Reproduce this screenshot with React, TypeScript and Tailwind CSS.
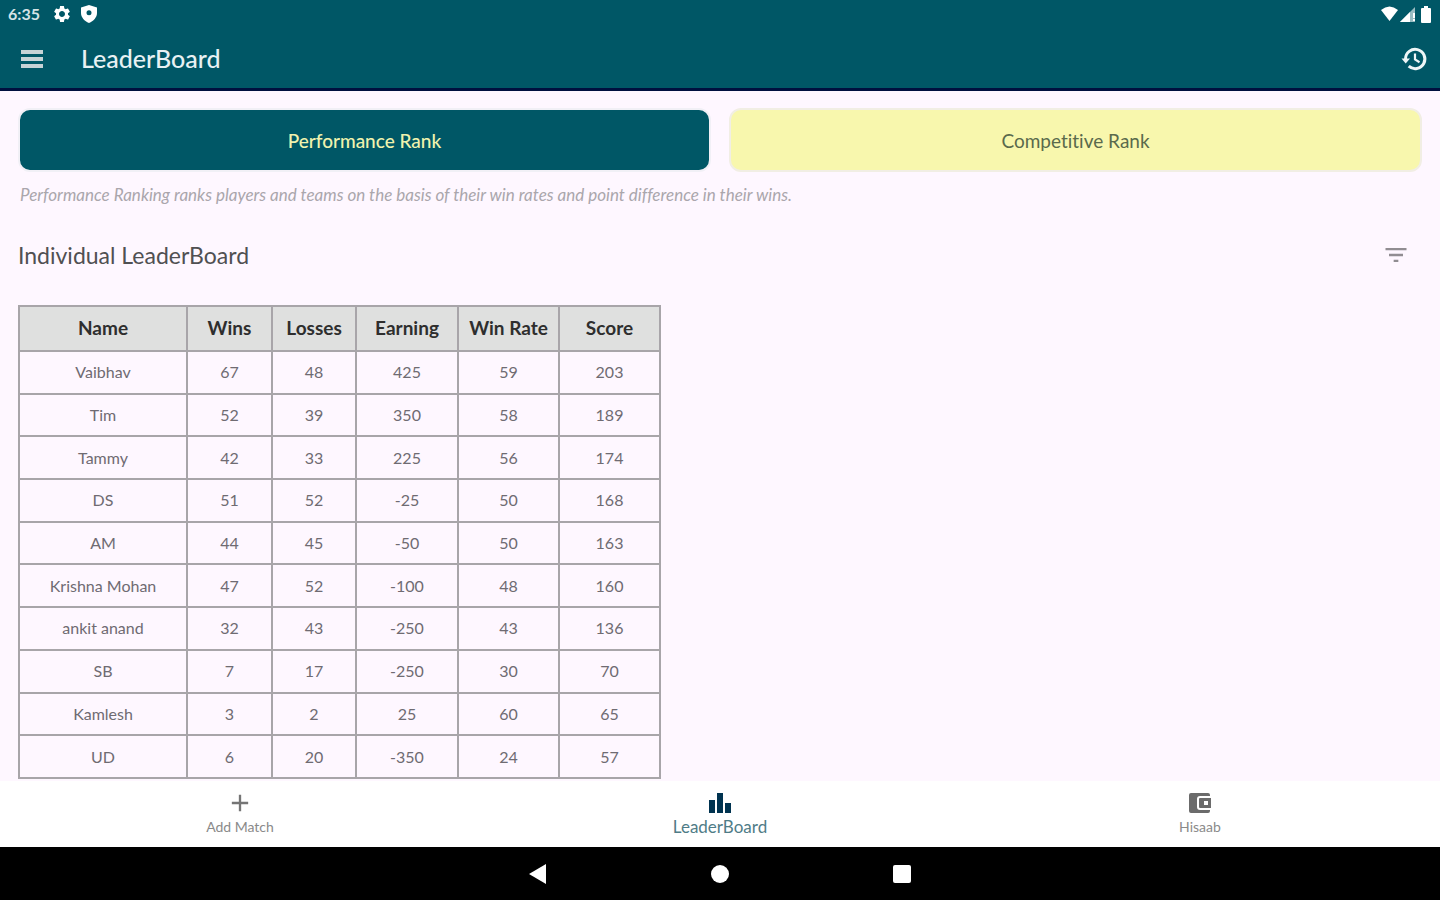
import { useState } from "react";
import { MdAdd, MdFilterList, MdSettings } from "react-icons/md";

const columns = ["Name", "Wins", "Losses", "Earning", "Win Rate", "Score"];

const players = [
  ["Vaibhav", 67, 48, 425, 59, 203],
  ["Tim", 52, 39, 350, 58, 189],
  ["Tammy", 42, 33, 225, 56, 174],
  ["DS", 51, 52, -25, 50, 168],
  ["AM", 44, 45, -50, 50, 163],
  ["Krishna Mohan", 47, 52, -100, 48, 160],
  ["ankit anand", 32, 43, -250, 43, 136],
  ["SB", 7, 17, -250, 30, 70],
  ["Kamlesh", 3, 2, 25, 60, 65],
  ["UD", 6, 20, -350, 24, 57],
];

function StatusBar() {
  return (
    <div className="flex h-7 items-center justify-between px-2 text-white">
      <div className="flex items-center">
        <span className="w-11 text-base font-bold text-[#d5e3e6]">6:35</span>
        <MdSettings className="mr-2 size-5" />
        <svg className="size-5" viewBox="0 0 20 20" fill="currentColor">
          <path
            fillRule="evenodd"
            d="M9 1 17 3.500V9c0 4.500-3.500 8-8 10-4.500-2-8-5.500-8-10V3.500ZM9 6.200a2.500 2.500 0 1 0 0 5 2.500 2.500 0 0 0 0-5Z"
          />
        </svg>
      </div>
      <div className="flex items-center gap-0.5">
        <svg className="h-4 w-[17px]" viewBox="0 0 17 16" fill="currentColor">
          <path d="M0 4Q8.500-3 17 4L8.500 15Z" />
        </svg>
        <svg className="mr-0.5 size-4" viewBox="0 0 16 16" fill="currentColor">
          <path opacity=".6" d="M0 16 15 1v15Z" />
          <path d="M0 16 10 6v10Z" />
          <path d="M13 7h2v5h-2zM13 13h2v2h-2z" />
        </svg>
        <svg className="h-[17px] w-3" viewBox="0 0 12 17" fill="currentColor">
          <path d="M4 0h4v2h2q1 0 1 1v13q0 1-1 1H2q-1 0-1-1V3q0-1 1-1h2Z" />
        </svg>
      </div>
    </div>
  );
}

function Header() {
  return (
    <header className="border-b-3 border-[#00103f] bg-[#005766]">
      <StatusBar />
      <div className="flex h-[60px] items-center pt-0.5 pl-[21px] pr-3">
        <button type="button" aria-label="Open menu" className="mr-[38px]">
          <svg className="h-[18px] w-[22px]" viewBox="0 0 22 18" fill="#c6d3d6">
            <path d="M0 0h22v4H0zM0 7h22v4H0zM0 14h22v4H0z" />
          </svg>
        </button>
        <h1 className="text-[25px] font-medium text-[#e8f1f3]">LeaderBoard</h1>
        <button type="button" aria-label="History" className="ml-auto text-[#eef6f7]">
          <svg className="size-7" viewBox="0 0 28 28" fill="none" stroke="currentColor">
            <path d="M5.500 14a9.700 9.700 0 1 1 3.200 7.200" strokeWidth="3" />
            <path d="M1.500 13.500h8.500L5.700 18.500Z" fill="currentColor" stroke="none" />
            <path d="M15 8.500v6l4.500 2.700" strokeWidth="2.200" />
          </svg>
        </button>
      </div>
    </header>
  );
}

function RankTabs() {
  const [rank, setRank] = useState("performance");
  const base = "h-16 flex-1 rounded-xl border-2 pt-0.5 text-[19px]";
  const active = "border-[#f1f0f6] bg-[#005766] font-medium text-[#f0f3ae]";
  const idle = "border-[#f1eee4] bg-[#f8f7ad] text-[#5a6a4c]";

  return (
    <div className="flex gap-[18px]">
      <button
        type="button"
        onClick={() => setRank("performance")}
        className={`${base} ${rank === "performance" ? active : idle}`}
      >
        Performance Rank
      </button>
      <button
        type="button"
        onClick={() => setRank("competitive")}
        className={`${base} ${rank === "competitive" ? active : idle}`}
      >
        Competitive Rank
      </button>
    </div>
  );
}

function LeaderTable() {
  return (
    <table className="h-[474px] w-[642px] table-fixed border-collapse text-center text-[#6f6b72]">
      <colgroup>
        <col className="w-[168px]" />
        <col className="w-[85px]" />
        <col className="w-[84px]" />
        <col className="w-[102px]" />
        <col className="w-[101px]" />
        <col className="w-[101px]" />
      </colgroup>
      <thead>
        <tr className="h-[45px] bg-[#dfe0df] text-[19px] text-[#2e2e2e]">
          {columns.map((name) => (
            <th key={name} className="border-2 border-[#a8a5a9] font-bold">
              {name}
            </th>
          ))}
        </tr>
      </thead>
      <tbody>
        {players.map((row) => (
          <tr key={row[0]} className="text-base leading-6">
            {row.map((cell, i) => (
              <td key={columns[i]} className="border-2 border-[#a8a5a9]">
                {cell}
              </td>
            ))}
          </tr>
        ))}
      </tbody>
    </table>
  );
}

function BottomNav() {
  const item = "flex flex-1 flex-col items-center pt-2 leading-5";
  return (
    <nav className="flex h-[66px] shrink-0 bg-white text-[#8a8a8a]">
      <a href="#add" className={`${item} text-sm`}>
        <MdAdd className="size-7 text-[#757575]" />
        Add Match
      </a>
      <a href="#leaderboard" className={`${item} text-[17px] text-[#4f7c87]`}>
        <svg className="h-7 w-6" viewBox="0 0 24 28" fill="#003350">
          <path d="M1 11h6v13H1zM9 4h6v20H9zM17 14h6v10h-6z" />
        </svg>
        LeaderBoard
      </a>
      <a href="#hisaab" className={`${item} text-sm`}>
        <svg className="h-7 w-6" viewBox="0 0 24 28" fill="#6b6b6b">
          <path
            fillRule="evenodd"
            d="M3 4h17q2 0 2 2v1H12q-3 0-3 3v8q0 3 3 3h10v1q0 2-2 2H3q-2 0-2-2V6q0-2 2-2ZM12 9h11v10H12q-1 0-1-1v-8q0-1 1-1Zm4 3v4h4v-4Z"
          />
        </svg>
        Hisaab
      </a>
    </nav>
  );
}

function SystemBar() {
  return (
    <div className="flex h-[53px] shrink-0 items-center justify-center gap-[162px] bg-black text-white">
      <button type="button" aria-label="Back">
        <svg className="size-5" viewBox="0 0 20 20" fill="currentColor">
          <path d="M1 10 18 0v20Z" />
        </svg>
      </button>
      <button type="button" aria-label="Home">
        <svg className="size-5" viewBox="0 0 20 20" fill="currentColor">
          <circle cx="10" cy="10" r="9" />
        </svg>
      </button>
      <button type="button" aria-label="Recent apps">
        <svg className="size-5" viewBox="0 0 20 20" fill="currentColor">
          <rect x="1" y="1" width="18" height="18" rx="2" />
        </svg>
      </button>
    </div>
  );
}

export default function App() {
  return (
    <div className="flex h-screen flex-col bg-[#fef7ff] font-['Lato',sans-serif] [font-variant-ligatures:none]">
      <Header />
      <main className="flex-1 overflow-hidden px-[18px] pt-[17px]">
        <RankTabs />
        <p className="mt-[11px] pl-0.5 text-[17px] leading-6 text-[#aaa6ac] italic">
          Performance Ranking ranks players and teams on the basis of their win
          rates and point difference in their wins.
        </p>
        <div className="mt-7 mb-[30px] flex h-10 items-center justify-between pr-3">
          <h2 className="text-[23px] text-[#505052]">Individual LeaderBoard</h2>
          <button type="button" aria-label="Filter" className="text-[#918d92]">
            <MdFilterList className="size-7" />
          </button>
        </div>
        <LeaderTable />
      </main>
      <BottomNav />
      <SystemBar />
    </div>
  );
}
